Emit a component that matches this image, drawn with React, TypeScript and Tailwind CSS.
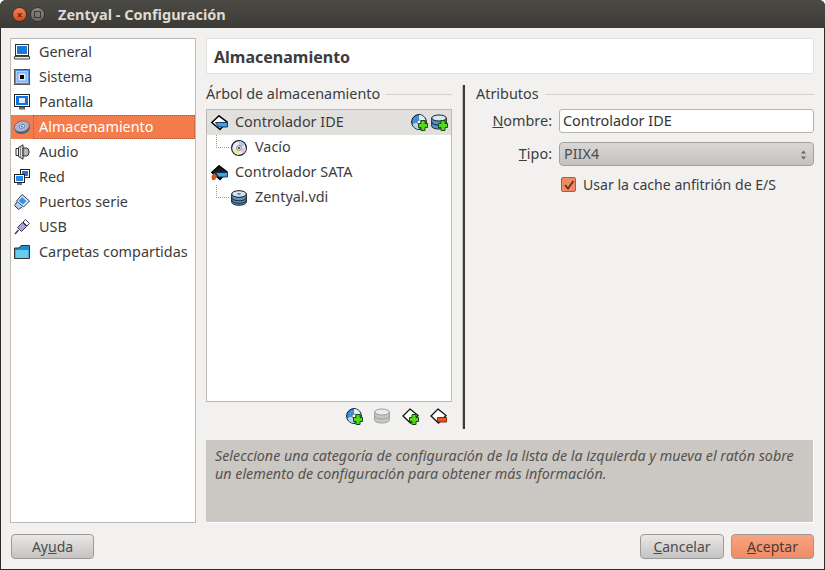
import type { ReactNode } from 'react';

const FONT = 'font-["Noto_Sans","Open_Sans",sans-serif]';

function Badge({ minus }: { minus?: boolean }) {
  if (minus) {
    return <path d="M7.5 9.5h9v4.5h-9z" fill="#f0541c" stroke="#6a2408" strokeWidth="0.9" />;
  }
  return <path d="M10 6.5h4v3h2.5v4H14v3h-4v-3H7.5v-4H10z" fill="#52d81e" stroke="#14500a" strokeWidth="1" />;
}

function Laptop() {
  return (
    <svg width="16" height="16" viewBox="0 0 16 16">
      <rect x="1.5" y="0.5" width="13" height="11" fill="#fff" stroke="#333" />
      <rect x="3" y="2" width="10" height="8" fill="#1878e0" />
      <path d="M0.5 12.5h15v2.5h-15z" fill="#e8e8e8" stroke="#444" />
    </svg>
  );
}

function Chip() {
  return (
    <svg width="16" height="16" viewBox="0 0 16 16">
      <rect x="0.5" y="0.5" width="15" height="15" fill="#4f8fe6" stroke="#555" />
      <rect x="2.5" y="2.5" width="11" height="11" fill="#7fb0f0" strokeDasharray="1 1" stroke="#fff" />
      <rect x="4.5" y="4.5" width="7" height="7" fill="#dbe8fa" />
      <rect x="6" y="6" width="4" height="4" fill="#000" />
    </svg>
  );
}

function Monitor() {
  return (
    <svg width="16" height="16" viewBox="0 0 16 16">
      <rect x="0.5" y="0.5" width="15" height="12" fill="#fff" stroke="#222" />
      <rect x="2" y="2" width="12" height="9" fill="#1070dc" />
      <rect x="5" y="4" width="6" height="5" fill="#e2eefc" />
      <path d="M5 13h6v2.5H5z" fill="#666" />
    </svg>
  );
}

function Disk() {
  return (
    <svg width="16" height="16" viewBox="0 0 16 16">
      <g transform="rotate(-14 8 8)">
        <ellipse cx="8" cy="9.6" rx="7.6" ry="5.4" fill="#565f78" />
        <ellipse cx="8" cy="7.4" rx="7.6" ry="5.4" fill="#aab4d0" stroke="#4e5a78" strokeWidth="0.7" />
        <ellipse cx="8" cy="7.4" rx="2.8" ry="1.9" fill="#d9def0" stroke="#5f6a88" strokeWidth="0.7" />
        <ellipse cx="8" cy="7.4" rx="1" ry="0.7" fill="#4e5a78" />
      </g>
    </svg>
  );
}

function Speaker() {
  return (
    <svg width="16" height="16" viewBox="0 0 16 16">
      <path d="M4.5 3.5L9 0.8v14.4L4.5 12.5z" fill="#e6e6e6" stroke="#2c2c2c" />
      <path d="M2 4.5h2.5v7H2z" fill="#fff" stroke="#2c2c2c" />
      <path d="M9 4h3.5a2.5 4 0 0 1 0 8H9z" fill="#b5b5b5" stroke="#2c2c2c" />
      <path d="M6.5 3v10" stroke="#888" />
    </svg>
  );
}

function Network() {
  return (
    <svg width="16" height="16" viewBox="0 0 16 16">
      <rect x="6.5" y="0.5" width="9" height="8" fill="#fff" stroke="#222" />
      <rect x="8" y="2" width="6" height="5" fill="#1878e0" />
      <rect x="0.5" y="5.5" width="10" height="8" fill="#fff" stroke="#222" />
      <rect x="2" y="7" width="7" height="5" fill="#2c8aec" />
      <path d="M3 15h5" stroke="#444" strokeWidth="1.4" />
    </svg>
  );
}

function SerialPort() {
  return (
    <svg width="16" height="16" viewBox="0 0 16 16">
      <path d="M8 0.5l7.5 6.5-6 6-7-6z" fill="#dceaf8" stroke="#2e3a4c" />
      <path d="M8 3l4.5 4-3.5 3.5L4.5 7z" fill="#2f95e8" />
      <path d="M3 8l-2.5 3.5 4 4L8 13" fill="#a9cdee" stroke="#2e3a4c" />
    </svg>
  );
}

function Usb() {
  return (
    <svg width="16" height="16" viewBox="0 0 16 16">
      <path d="M3.5 8.5l5-5 4 4-5 5z" fill="#a7a4e8" stroke="#3c3c50" />
      <path d="M9 3l2.5-2.5 4 4L13 7z" fill="#f4f4f4" stroke="#3c3c50" />
      <path d="M4.5 11L1 15" stroke="#3c3c50" strokeWidth="1.5" />
    </svg>
  );
}

function Folder() {
  return (
    <svg width="16" height="16" viewBox="0 0 16 16">
      <path d="M0.5 4V14.5H15.5V1.5H7L5 4z" fill="#1e8ed2" stroke="#333" />
      <path d="M1.5 6h13v8h-13z" fill="#66cdf2" />
    </svg>
  );
}

function ControllerIcon({ sata }: { sata?: boolean }) {
  return (
    <svg width="17" height="16" viewBox="0 0 17 16">
      <path d="M8 0.8L16 7l-7 7.5L0.8 7.5z" fill={sata ? '#1c1c1c' : '#fff'} stroke="#000" strokeWidth="1.5" />
      <path d="M4.5 7.5h12v4.5H7.5z" fill="#3f9fe8" stroke="#0c2c50" strokeWidth="0.9" />
      {sata && <path d="M0.5 11l3-3 2.5 3-2 4H1z" fill="#d9521a" />}
    </svg>
  );
}

function CdIcon() {
  return (
    <svg width="16" height="16" viewBox="0 0 16 16">
      <circle cx="8" cy="8" r="7.4" fill="#e8eef8" stroke="#1a1a1a" strokeWidth="1.2" />
      <path d="M8 1a7 7 0 0 1 6 4L8 8z" fill="#a9c8f4" />
      <path d="M8 15a7 7 0 0 1-6-4l6-3z" fill="#e4e8a8" />
      <path d="M15 8a7 7 0 0 1-3 5.8L8 8z" fill="#f0bfe2" />
      <circle cx="8" cy="8" r="2.4" fill="#fff" stroke="#555" strokeWidth="0.7" />
      <circle cx="8" cy="8" r="1" fill="#222" />
    </svg>
  );
}

function HardDisk() {
  return (
    <svg width="16" height="16" viewBox="0 0 16 16">
      <path d="M0.7 4v8c0 1.8 3.3 3.3 7.3 3.3s7.3-1.5 7.3-3.3V4z" fill="#5b97d0" stroke="#1a1a1a" />
      <ellipse cx="8" cy="4" rx="7.3" ry="3.3" fill="#d4e4f4" stroke="#1a1a1a" />
      <path d="M0.7 7.5c0 1.8 3.3 3.3 7.3 3.3s7.3-1.5 7.3-3.3M0.7 10c0 1.8 3.3 3.3 7.3 3.3s7.3-1.5 7.3-3.3" fill="none" stroke="#1a1a1a" />
      <ellipse cx="8" cy="4" rx="2" ry="1" fill="#6f8aa6" />
    </svg>
  );
}

function AddCd() {
  return (
    <svg width="17" height="17" viewBox="0 0 17 17">
      <circle cx="8" cy="8" r="7.4" fill="#3f8fdc" stroke="#111" />
      <path d="M8 1a7 7 0 0 1 6.5 5L8 8z" fill="#e4eef8" />
      <path d="M8 15a7 7 0 0 1-6.5-5L8 8z" fill="#bcd6ee" />
      <circle cx="8" cy="8" r="2" fill="#fff" stroke="#444" strokeWidth="0.7" />
      <Badge />
    </svg>
  );
}

function AddHd({ faded }: { faded?: boolean }) {
  return (
    <svg width="17" height="17" viewBox="0 0 17 17" className={faded ? 'opacity-40 grayscale' : ''}>
      <path d="M0.7 4v8c0 1.8 3.3 3 7.3 3s7.3-1.2 7.3-3V4z" fill="#4f93d0" stroke="#222" />
      <ellipse cx="8" cy="4" rx="7.3" ry="3" fill="#d9e8f5" stroke="#222" />
      <path d="M0.7 8c0 1.8 3.3 3 7.3 3s7.3-1.2 7.3-3" fill="none" stroke="#222" />
      {!faded && <Badge />}
    </svg>
  );
}

function CtrlAction({ minus }: { minus?: boolean }) {
  return (
    <svg width="17" height="17" viewBox="0 0 17 17">
      <path d="M8 1l8 6.5L8.5 15 1 8z" fill="#fff" stroke="#111" strokeWidth="1.3" />
      <Badge minus={minus} />
    </svg>
  );
}

const SECTIONS = [
  { label: 'General', icon: <Laptop /> },
  { label: 'Sistema', icon: <Chip /> },
  { label: 'Pantalla', icon: <Monitor /> },
  { label: 'Almacenamiento', icon: <Disk />, active: true },
  { label: 'Audio', icon: <Speaker /> },
  { label: 'Red', icon: <Network /> },
  { label: 'Puertos serie', icon: <SerialPort /> },
  { label: 'USB', icon: <Usb /> },
  { label: 'Carpetas compartidas', icon: <Folder /> },
];

function GroupTitle({ children }: { children: ReactNode }) {
  return (
    <div className="flex items-center gap-[6px] h-[18px]">
      <span className="whitespace-nowrap">{children}</span>
      <div className="flex-1 h-px bg-[#d5d2cf]" />
    </div>
  );
}

function TreeRow({ icon, label, child, selected, extra }: { icon: ReactNode; label: string; child?: boolean; selected?: boolean; extra?: ReactNode }) {
  return (
    <div className={`h-[25px] flex items-center relative ${selected ? 'bg-[#e2e0dd]' : ''} ${child ? 'pl-[24px]' : 'pl-[4px]'}`}>
      {child && <div className="absolute left-[9px] top-0 w-[13px] h-[13px] border-l border-b border-dotted border-[#999]" />}
      <span className="w-[24px] shrink-0 flex">{icon}</span>
      <span>{label}</span>
      {extra && <div className="ml-auto mr-[3px] flex gap-[3px]">{extra}</div>}
    </div>
  );
}

function DialogButton({ children, primary, className }: { children: ReactNode; primary?: boolean; className?: string }) {
  return (
    <button
      type="button"
      className={`h-[25px] rounded-[4px] border border-[#9c9a97] text-[14px] ${primary ? 'bg-gradient-to-b from-[#f7a483] to-[#f18a63] text-[#4c3a33]' : 'bg-gradient-to-b from-[#e9e8e6] to-[#c4c3c1] text-[#4c4c4c]'} ${className ?? ''}`}
    >
      {children}
    </button>
  );
}

export default function App() {
  return (
    <div className={`w-[825px] h-[570px] flex flex-col overflow-hidden bg-[#2c2b28] rounded-t-[6px] text-[14.4px] leading-none text-[#3c3c3c] ${FONT}`}>
      {/* title bar */}
      <div className="h-[28px] shrink-0 flex items-center pl-[12px] pt-px bg-gradient-to-b from-[#4b4a45] to-[#3c3b37]">
        <div className="w-[15px] h-[15px] rounded-full bg-gradient-to-b from-[#f4814f] to-[#d9481d] border border-[#33322e] flex items-center justify-center text-[10px] font-bold text-[#5a2412]">×</div>
        <div className="ml-[3px] w-[15px] h-[15px] rounded-full bg-gradient-to-b from-[#8a8883] to-[#6a6864] border border-[#33322e] flex items-center justify-center">
          <div className="w-[7px] h-[7px] border border-[#3a3935]" />
        </div>
        <span className="ml-[13px] text-[14.5px] font-bold text-[#dfdbd2]">Zentyal - Configuración</span>
      </div>

      {/* body */}
      <div className="flex-1 min-h-0 mx-px mb-px bg-[#f2f1f0] flex flex-col pt-[10px] pl-[9px] pr-[10px]">
        <div className="flex gap-[10px] h-[485px]">
          <div className="w-[186px] shrink-0 bg-white border border-[#bdbab6]">
            {SECTIONS.map((s) => (
              <div key={s.label} className={`h-[24px] mt-px flex items-center pl-[3px] ${s.active ? 'bg-[#f47c4c] text-white' : ''}`}>
                <span className="w-[19px] shrink-0 flex">{s.icon}</span>
                <span className={`flex-1 h-full flex items-center pl-[5px] whitespace-nowrap border border-dotted ${s.active ? 'border-[#b8562f]' : 'border-transparent'}`}>{s.label}</span>
              </div>
            ))}
          </div>

          <div className="flex-1 min-w-0 flex flex-col">
            <div className="h-[36px] shrink-0 bg-white border border-[#e4e2df] flex items-center pl-[7px] pt-px text-[16px] font-bold">Almacenamiento</div>

            <div className="flex-1 min-h-0 flex pt-[11px]">
              <div className="w-[246px] shrink-0 flex flex-col">
                <div className="mb-[6px]"><GroupTitle>Árbol de almacenamiento</GroupTitle></div>
                <div className="h-[293px] bg-white border border-[#bdbab6]">
                  <TreeRow
                    selected
                    icon={<ControllerIcon />}
                    label="Controlador IDE"
                    extra={<><AddCd /><AddHd /></>}
                  />
                  <TreeRow child icon={<CdIcon />} label="Vacío" />
                  <TreeRow icon={<ControllerIcon sata />} label="Controlador SATA" />
                  <TreeRow child icon={<HardDisk />} label="Zentyal.vdi" />
                </div>
                <div className="flex justify-end gap-[11px] pr-[5px] pt-[6px]">
                  <AddCd />
                  <AddHd faded />
                  <CtrlAction />
                  <CtrlAction minus />
                </div>
              </div>

              <div className="w-[3px] h-[344px] ml-[10px] shrink-0 border-l border-[#c4c2bf] bg-[#3c3b38]" />

              <div className="flex-1 min-w-0 pl-[11px]">
                <GroupTitle>Atributos</GroupTitle>
                <div className="mt-[6px] flex items-center">
                  <span className="w-[83px] text-right shrink-0 pr-[7px] pt-px"><u>N</u>ombre:</span>
                  <div className="flex-1 h-[24px] bg-white border border-[#b5b2ae] rounded-[3px] flex items-center pl-[3px] pt-px text-[#333]">Controlador IDE</div>
                </div>
                <div className="mt-[9px] flex items-center">
                  <span className="w-[83px] text-right shrink-0 pr-[7px] pt-px"><u>T</u>ipo:</span>
                  <div className="flex-1 h-[24px] bg-gradient-to-b from-[#d9d8d6] to-[#c3c2c0] border border-[#a4a29e] rounded-[4px] flex items-center justify-between pl-[4px] pr-[6px] pt-px text-[#4c4c4c]">
                    PIIX4
                    <svg width="7" height="12" viewBox="0 0 7 12"><path d="M3.5 1.5L6 4.5H1zM3.5 10.5L1 7.5H6z" fill="#666" /></svg>
                  </div>
                </div>
                <div className="mt-[11px] ml-[85px] flex items-center gap-[7px]">
                  <div className="w-[15px] h-[15px] rounded-[2px] border border-[#b45a34] bg-[#f18a63] flex items-center justify-center">
                    <svg width="12" height="12" viewBox="0 0 12 12"><path d="M2 6l3 3.5L10.5 2" fill="none" stroke="#5a3020" strokeWidth="1.8" /></svg>
                  </div>
                  <span className="whitespace-nowrap text-[14.1px] pt-px">Usar la cache anfitrión de E/S</span>
                </div>
              </div>
            </div>

            <div className="h-[83px] mt-auto shrink-0 bg-[#cbc7c3] border-b border-r border-white px-[9px] pt-[7px] italic text-[14.3px] text-[#55524e] leading-[18px]">
              Seleccione una categoría de configuración de la lista de la izquierda y mueva el ratón sobre un elemento de configuración para obtener más información.
            </div>
          </div>
        </div>

        {/* buttons */}
        <div className="flex items-center mt-[11px] pl-[1px]">
          <DialogButton className="w-[83px]">Ay<u>u</u>da</DialogButton>
          <div className="flex-1" />
          <DialogButton className="w-[84px]"><u>C</u>ancelar</DialogButton>
          <DialogButton primary className="w-[83px] ml-[7px]"><u>A</u>ceptar</DialogButton>
        </div>
      </div>
    </div>
  );
}
